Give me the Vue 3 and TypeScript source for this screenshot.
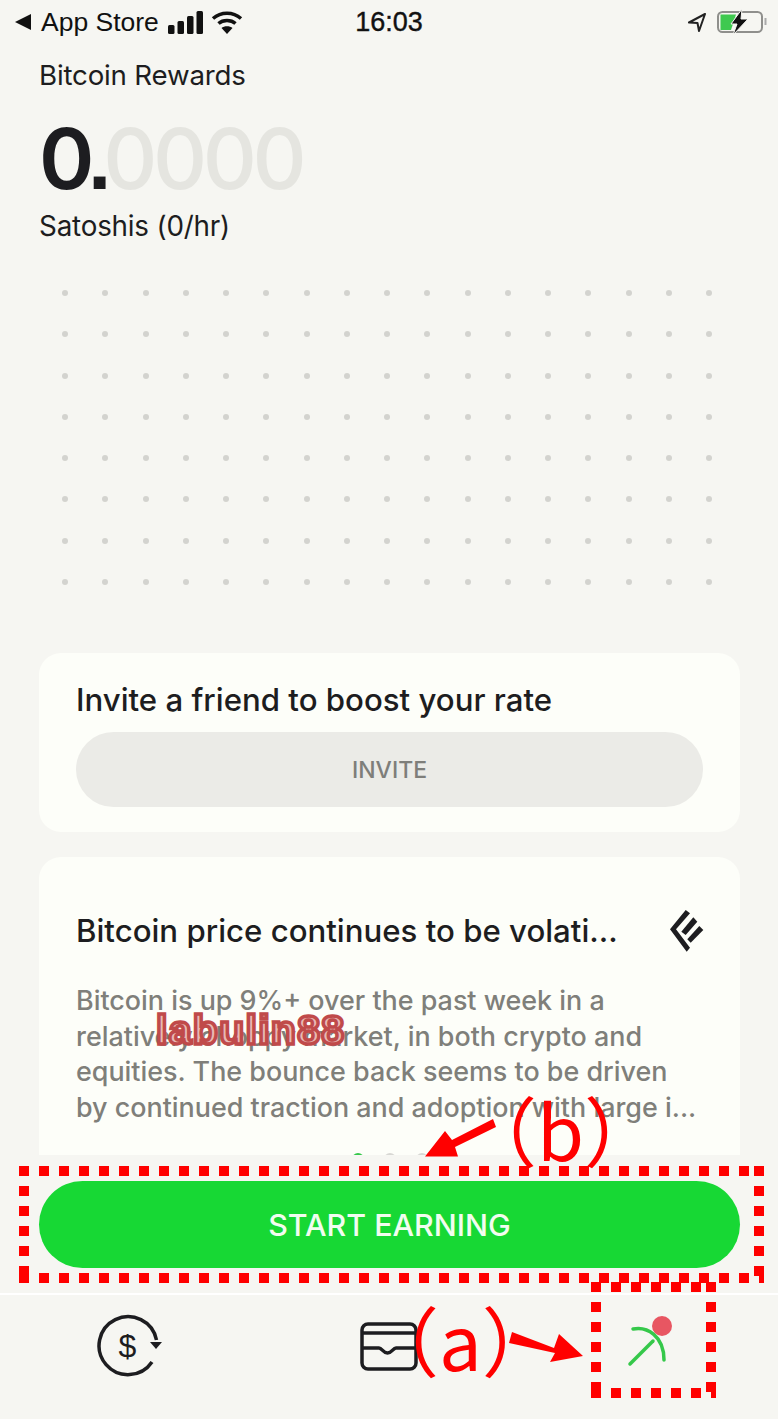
<script setup lang="ts">
const dotCols = 17
const dotRows = 8
const bodyLines = [
  'Bitcoin is up 9%+ over the past week in a',
  'relatively choppy market, in both crypto and',
  'equities. The bounce back seems to be driven',
  'by continued traction and adoption with large i...',
]
</script>

<template>
  <div class="screen">
    <div class="scroll">
      <div class="status">
        <div class="status-left">
          <span class="back-tri"></span>
          <span class="carrier">App Store</span>
          <svg class="signal" width="35" height="23" viewBox="0 0 35 23">
            <rect x="0" y="14" width="6.500" height="9" rx="1.500" />
            <rect x="9.500" y="10" width="6.500" height="13" rx="1.500" />
            <rect x="19" y="5" width="6.500" height="18" rx="1.500" />
            <rect x="28.500" y="0" width="6.500" height="23" rx="1.500" />
          </svg>
          <svg class="wifi" width="32" height="24" viewBox="0 0 32 24">
            <path d="M2 8.500C10 1.500 22 1.500 30 8.500" />
            <path d="M7.500 13.500C12 9.500 20 9.500 24.500 13.500" />
            <path class="wifi-tip" d="M16 24L10.500 18C13 15.500 19 15.500 21.500 18Z" />
          </svg>
        </div>
        <span class="clock">16:03</span>
        <div class="status-right">
          <svg width="20" height="20" viewBox="0 0 20 20">
            <path class="nav-arrow" d="M18 2L2 10.500L10.500 11L12 19Z" />
          </svg>
          <svg width="50" height="26" viewBox="0 0 50 26">
            <rect class="batt-case" x="1" y="3" width="44" height="20" rx="4.500" />
            <path class="batt-nub" d="M48.500 9V16" />
            <path class="batt-fill" d="M3.500 5.500H19L14 21H3.500Z" />
            <path class="batt-bolt" d="M25 0L14 15H20L16 26L31 10H24Z" />
          </svg>
        </div>
      </div>

      <div class="rewards">
        <div class="rewards-title">Bitcoin Rewards</div>
        <div class="amount"><span class="amount-on">0<span class="point">.</span></span><span class="amount-off">0000</span></div>
        <div class="rate">Satoshis (0/hr)</div>
      </div>

      <div class="dots">
        <span v-for="n in dotCols * dotRows" :key="n" class="dot"></span>
      </div>

      <div class="cards">
        <section class="card invite">
          <h2 class="card-title">Invite a friend to boost your rate</h2>
          <button class="invite-btn">INVITE</button>
        </section>

        <section class="card news">
          <div class="news-head">
            <h2 class="card-title">Bitcoin price continues to be volati...</h2>
            <svg class="news-logo" width="38" height="47" viewBox="0 0 38 47">
              <path d="M17.700 3L22 6.300L8 22.300L22 40.700L18.700 44.700L2 22.300Z" />
              <path d="M25.300 10.300L29.300 14.700L17.700 28L13.300 24.700Z" />
              <path d="M31.300 19L35.300 23L22.700 35.700L19.300 32.300Z" />
            </svg>
          </div>
          <p class="news-body">
            <span v-for="line in bodyLines" :key="line" class="news-line">{{ line }}</span>
          </p>
          <div class="pager">
            <span class="pager-dot on"></span>
            <span class="pager-dot"></span>
            <span class="pager-dot"></span>
          </div>
        </section>
      </div>
    </div>

    <div class="cta">
      <button class="cta-btn">START EARNING</button>
    </div>

    <nav class="tabs">
      <svg width="68" height="64" viewBox="0 0 68 64">
        <path class="tab-line" d="M56 48A29 29 0 1 1 60.500 26" />
        <path class="tab-solid" d="M54 28L66 28L60 35Z" />
        <text class="dollar" x="31.500" y="43" text-anchor="middle">$</text>
      </svg>
      <svg width="58" height="64" viewBox="0 0 58 64">
        <rect class="tab-line" x="2" y="10" width="54" height="45" rx="6" />
        <path class="tab-line" d="M2 19H56" />
        <path class="tab-line" d="M2 34H19C22 34 23 39 27.500 39C32 39 33 34 36 34H56" />
      </svg>
      <svg width="50" height="64" viewBox="0 0 50 64">
        <path class="pick" d="M7 50L30 27" />
        <path class="pick" d="M10 15C24 12 41 22 41 46" />
        <circle class="pick-dot" cx="39" cy="12" r="10" />
      </svg>
    </nav>

    <!-- Anmerkungen aus dem Screenshot, liegen ueber der App -->
    <div class="note note-cta"></div>
    <div class="note note-tab"></div>
    <div class="label label-a">（a）</div>
    <div class="label label-b">（b）</div>
    <div class="watermark">labulin88</div>
    <svg class="arrow arrow-a" width="80" height="40" viewBox="0 0 80 40">
      <path d="M7 4L49 20L54 6L78 28L45 34L50 25L4 15Z" />
    </svg>
    <svg class="arrow arrow-b" width="84" height="42" viewBox="0 0 84 42">
      <path d="M73 4L76 12L35 32L38 41.500L5 41.500L25 16L32 25Z" />
    </svg>
  </div>
</template>

<style>
html, body {
  margin: 0;
  background: #f6f6f2;
}
</style>

<style scoped>
.screen {
  position: relative;
  width: 778px;
  height: 1419px;
  display: flex;
  flex-direction: column;
  overflow: hidden;
  background: #f6f6f2;
  color: #1d1d20;
  font-family: "Inter", "Liberation Sans", sans-serif;
}

.scroll {
  height: 1155px;
  overflow: hidden;
  flex: none;
}

.status {
  height: 44px;
  display: grid;
  grid-template-columns: 1fr auto 1fr;
  align-items: center;
  padding: 0 11px;
  font-family: "Liberation Sans", sans-serif;
  color: #111;
}

.status-left {
  display: flex;
  align-items: center;
  margin-left: 4px;
}

.back-tri {
  width: 0;
  height: 0;
  border-top: 8px solid transparent;
  border-bottom: 8px solid transparent;
  border-right: 16px solid #111;
  margin-right: 10px;
}

.carrier {
  font-size: 26.500px;
  margin-right: 9px;
}

.signal rect {
  fill: #111;
}

.wifi {
  margin-left: 8px;
}

.wifi path {
  fill: none;
  stroke: #111;
  stroke-width: 3.500;
}

.wifi .wifi-tip {
  fill: #111;
  stroke: none;
}

.clock {
  font-size: 27px;
  -webkit-text-stroke: 0.4px #111;
}

.status-right {
  display: flex;
  align-items: center;
  justify-content: flex-end;
  gap: 10px;
}

.nav-arrow {
  fill: none;
  stroke: #222;
  stroke-width: 2;
  stroke-linejoin: round;
}

.batt-case {
  fill: none;
  stroke: #8f8f8c;
  stroke-width: 2;
}

.batt-nub {
  stroke: #aaa;
  stroke-width: 2;
}

.batt-fill {
  fill: #3fc94f;
}

.batt-bolt {
  fill: #111;
  stroke: #f6f6f2;
  stroke-width: 1;
}

.rewards {
  padding: 13px 0 0 39px;
}

.rewards-title {
  font-size: 27.700px;
  line-height: 36px;
  letter-spacing: -0.2px;
}

.amount {
  font-size: 84px;
  line-height: 100px;
  margin-top: 16px;
  letter-spacing: -4.500px;
  font-weight: 500;
  display: flex;
}

.amount-on {
  color: #1d1d20;
  font-weight: 600;
}

.point {
  font-family: "Liberation Sans", sans-serif;
  font-weight: 700;
  letter-spacing: -8px;
  margin-left: -2px;
}

.amount-off {
  color: #e5e5e0;
}

.rate {
  font-size: 27.800px;
  line-height: 36px;
  letter-spacing: -0.2px;
  margin-top: -2px;
}

.dots {
  margin: 46px 0 0 62px;
  display: grid;
  grid-template-columns: repeat(17, 6px);
  grid-auto-rows: 6px;
  column-gap: 34.250px;
  row-gap: 35.300px;
}

.dot {
  width: 6px;
  height: 6px;
  border-radius: 50%;
  background: #d3d3cf;
}

.cards {
  margin: 68px 38px 0 39px;
  display: flex;
  flex-direction: column;
  gap: 25px;
}

.card {
  background: #fdfef9;
  border-radius: 22px;
}

.invite {
  height: 179px;
  padding: 28px 37px 0;
  box-sizing: border-box;
}

.card-title {
  margin: 0;
  font-size: 31.200px;
  line-height: 38px;
  font-weight: 500;
  white-space: nowrap;
}

.invite-btn {
  display: block;
  width: 100%;
  height: 75px;
  margin-top: 13px;
  border: none;
  border-radius: 38px;
  background: #ebebe7;
  color: #7e7e7a;
  font-family: inherit;
  font-size: 23px;
  font-weight: 500;
}

.news {
  height: 400px;
  padding: 50px 37px 0;
  box-sizing: border-box;
}

.news-head {
  display: flex;
  align-items: center;
  justify-content: space-between;
}

.news-logo {
  fill: #1d1d20;
  margin-right: -3px;
}

.news-body {
  margin: 29px 0 0;
  font-size: 26.900px;
  line-height: 35.700px;
  color: #7f7f7a;
  font-weight: 500;
}

.news-line {
  display: block;
  white-space: nowrap;
}

.pager {
  display: flex;
  justify-content: center;
  gap: 20px;
  margin-top: 27px;
}

.pager-dot {
  width: 12px;
  height: 12px;
  border-radius: 50%;
  background: #d8d8d4;
}

.pager-dot.on {
  background: #35c84a;
}

.cta {
  height: 138px;
  flex: none;
  padding: 26px 38px 0 39px;
  box-sizing: border-box;
}

.cta-btn {
  display: block;
  width: 100%;
  height: 87px;
  border: none;
  border-radius: 44px;
  background: #17d834;
  color: #f2fdf0;
  font-family: inherit;
  font-size: 30.400px;
  font-weight: 500;
}

.tabs {
  flex: 1;
  border-top: 2px solid #fff;
  display: grid;
  grid-template-columns: repeat(3, 1fr);
  justify-items: center;
  align-items: start;
  padding-top: 19px;
}

.tab-line {
  fill: none;
  stroke: #1d1d20;
  stroke-width: 3.500;
}

.tab-solid {
  fill: #1d1d20;
}

.dollar {
  font-family: "Liberation Sans", sans-serif;
  font-size: 32px;
  fill: #1d1d20;
}

.pick {
  fill: none;
  stroke: #35c84a;
  stroke-width: 3.500;
  stroke-linecap: round;
}

.pick-dot {
  fill: #e85662;
}

.note {
  position: absolute;
  --sq: repeating-linear-gradient(90deg, #ff0000 0 10px, transparent 10px 20px);
  --sq-v: repeating-linear-gradient(180deg, #ff0000 0 10px, transparent 10px 20px);
  background-image: var(--sq), var(--sq), var(--sq-v), var(--sq-v);
  background-repeat: no-repeat;
  background-size: 100% 10px, 100% 10px, 10px 100%, 10px 100%;
  background-position: left top, left bottom, left top, right top;
}

.note-cta {
  left: 19px;
  top: 1166px;
  width: 745px;
  height: 117px;
}

.note-tab {
  left: 591px;
  top: 1282px;
  width: 125px;
  height: 116px;
}

.label {
  position: absolute;
  color: #ff0000;
  font-family: "Noto Sans CJK SC", "Noto Sans", sans-serif;
  font-size: 76px;
  line-height: 80px;
  white-space: nowrap;
}

.label-a {
  left: 363px;
  top: 1298px;
}

.label-b {
  left: 461px;
  top: 1088px;
}

.watermark {
  position: absolute;
  left: 156px;
  top: 1005px;
  font-family: "Liberation Sans", sans-serif;
  font-size: 41px;
  line-height: 50px;
  font-weight: 700;
  letter-spacing: 1.300px;
  color: #e9b9b4;
  -webkit-text-stroke: 3.500px #c04a4a;
}

.arrow {
  position: absolute;
  fill: #ff0000;
}

.arrow-a {
  left: 505px;
  top: 1328px;
}

.arrow-b {
  left: 420px;
  top: 1115px;
}
</style>
